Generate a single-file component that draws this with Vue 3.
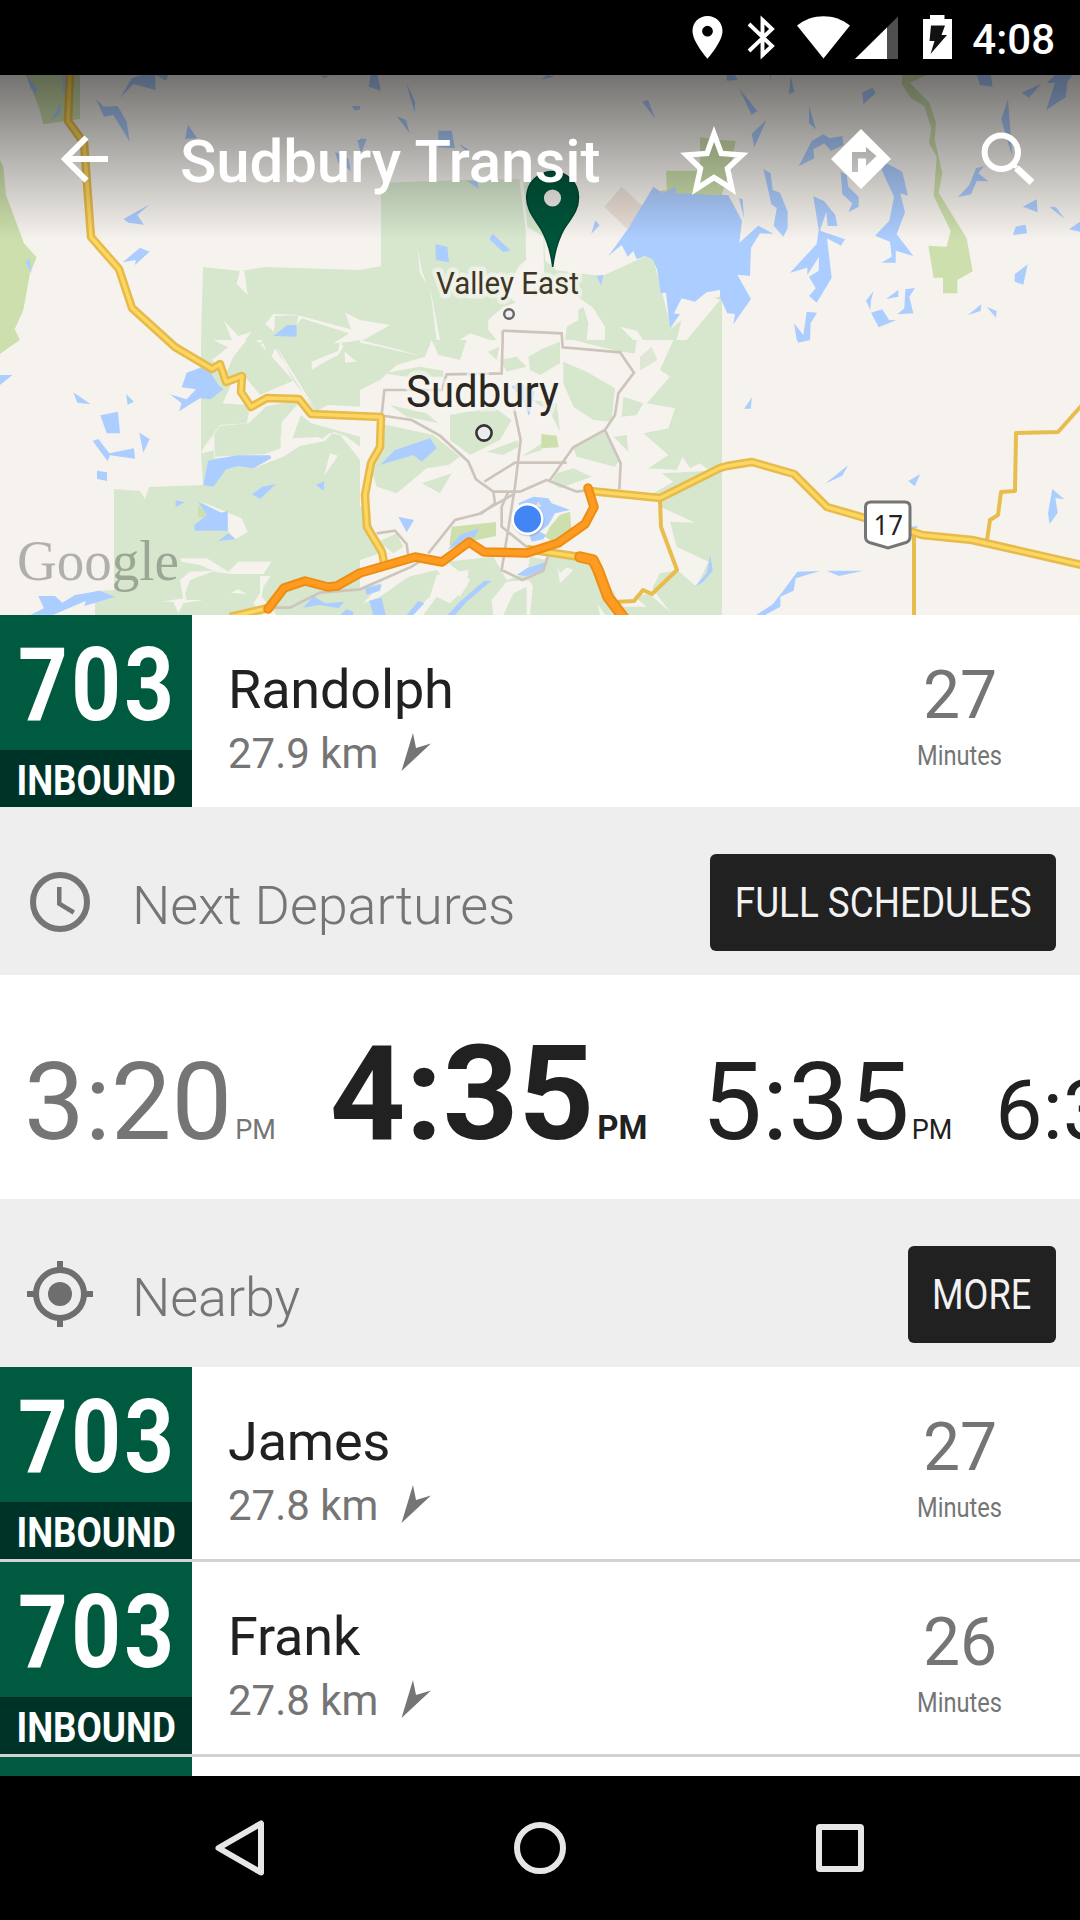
<script setup>
import { h } from 'vue'

const next = { route: '703', dir: 'INBOUND', name: 'Randolph', dist: '27.9 km', min: 27 }
const nearby = [
  { route: '703', dir: 'INBOUND', name: 'James', dist: '27.8 km', min: 27 },
  { route: '703', dir: 'INBOUND', name: 'Frank', dist: '27.8 km', min: 26 },
  { route: '', dir: '', name: '', dist: '', min: '' },
]
const times = [
  { t: '3:20', pm: 'PM', cls: 'past' },
  { t: '4:35', pm: 'PM', cls: 'current' },
  { t: '5:35', pm: 'PM', cls: 'later' },
  { t: '6:3', pm: '', cls: 'far' },
]

const StopRow = (p) =>
  h('div', { class: 'row' }, [
    h('div', { class: 'badge' }, [
      h('div', { class: 'num' }, [h('span', p.stop.route)]),
      h('div', { class: 'dir' }, [h('span', p.stop.dir)]),
    ]),
    p.stop.name
      ? h('div', { class: 'info' }, [
          h('div', { class: 'name' }, p.stop.name),
          h('div', { class: 'dist' }, [
            p.stop.dist,
            h('svg', { viewBox: '0 0 30 38', width: 30, height: 38 }, [
              h('path', { d: 'M12 0L15 15L30 10.5L0.5 38Z', fill: '#757575' }),
            ]),
          ]),
        ])
      : null,
    p.stop.name
      ? h('div', { class: 'eta' }, [
          h('div', { class: 'min' }, String(p.stop.min)),
          h('div', { class: 'unit' }, [h('span', 'Minutes')]),
        ])
      : null,
  ])
StopRow.props = ['stop']

const yellow = [
  'M70 70L70 75L68 121L84 143L91 237L119 269L132 308L175 347L212 369L220 364L226 382L242 376L241 392L251 407L267 398L299 399L311 414L381 417L380 447L371 463L365 495L367 527L382 552L384 562',
  'M590 491L660 498L720 468L727 466L752 462L794 474L827 507L865 518L913 532L922 535L972 540L1082 565',
  'M527 549L580 557',
  'M230 617L268 608',
]
const thin = [
  'M660 500L661 527L677 570L652 594L643 590L634 601L615 602',
  'M987 540L990 520L998 515L1001 492L1015 491L1016 433L1058 432L1082 405',
  'M914 533V616',
]
const orange = [
  { w: 9.5, d: 'M268 609L284 588L305 581L328 587L337 586L360 573L415 557L442 562L469 542L484 552L527 553L558 543L585 524L594 507L588 488' },
  { w: 11.5, d: 'M580 557L593 560L598 570L608 597L627 622' },
]
</script>

<template>
  <div class="screen">
    <header class="status">
      <svg width="440" height="75" viewBox="640 0 440 75" fill="#fff">
        <path fill-rule="evenodd" d="M707.500 16C699 16 692.500 22.600 692.500 31C692.500 42 707.500 58.700 707.500 58.700S722.500 42 722.500 31C722.500 22.600 716 16 707.500 16ZM707.500 25.800a5.400 5.400 0 1 1 0 10.800a5.400 5.400 0 1 1 0-10.800Z" />
        <path fill="none" stroke="#fff" stroke-width="3.900" d="M749 24L772 46L762.500 55V20L772 29L749 51" />
        <path d="M797 25.500C812 13 835 13 850 25.500L823.500 58.500Z" />
        <path d="M898 16.500V59H855Z" fill="#4f4f4f" />
        <path d="M887 27.500V59H855Z" />
        <path d="M930 15H944.500V19H952V59H923V19H930Z" />
        <path d="M931 25.500H945L941.500 35H947L930.500 54L934.500 41H929.500Z" fill="#111" />
      </svg>
      <span class="clock">4:08</span>
    </header>

    <section class="map">
      <svg class="canvas" width="1080" height="540" viewBox="0 75 1080 540">
        <rect y="75" width="1080" height="540" fill="#f6f3ee" />
        <path fill="#d7e7ce" d="M203 267L240 271L265 267L360 270L381 266L381 183L460 180L520 179L543 180L545 260L556 270L584 274L602 276L646 256L653 258L660 285L671 327L695 302L722 296V615H95V591L114 590V489L140 491L145 499L149 487L203 485L201 453V340Z" />
        <!-- western tiles -->
        <g transform="translate(0 60) scale(.33333)">
          <path fill="#cddfac" d="M0 300L10 320L18 405L72 550L110 592L90 640L70 750L44 808L60 840L0 880ZM78 45H240V177L130 193L118 145Z" />
          <path fill="#f6f3ee" d="M720 630L733 632L743 705L710 672ZM820 762L888 764L1080 815V830L905 775L890 795L895 765L825 768L822 815L796 792ZM672 782L715 828L755 815L720 860L700 850ZM1036 758L1080 780V840L1050 845L1000 850L1056 815Z" />
          <path fill="#accdff" d="M395 55L425 45H466V90L400 72L360 115ZM468 45H505L498 62ZM288 118L312 140L353 138L380 185L389 245L340 165L312 170ZM564 195L592 235L555 237ZM450 433L412 465L432 494L385 488L370 477ZM420 563L449 575L405 615L407 600L368 607ZM80 45L110 85L108 105L92 85ZM188 48H200V105L188 98ZM183 130L180 160L150 185ZM77 607L88 595L95 640ZM820 828L862 795H890V830ZM1055 138H1080V148L1065 152ZM1072 240H1080V270ZM1005 275L1045 295L1053 332L1015 308ZM962 47H988L975 54Z" />
        </g>
        <g transform="translate(0 340) scale(.33333)">
          <path fill="#cddfac" d="M0 0H55L0 42Z" />
          <path fill="#f6f3ee" d="M603 340L643 285V355L700 350L760 385L850 350L900 318L975 303L1000 275L1040 290L1080 320V360L1045 315L1020 285L990 278L970 295L877 295L903 225L935 250L1080 290V200L985 195L945 215L825 25L810 60L790 10L765 20L790 0H640L720 40L700 20L700 10L635 60L670 90L720 100L725 60ZM880 122L830 20L945 205ZM603 340L660 258L745 250L810 190L720 130L700 125L700 180L800 200L845 250L842 325L880 315L975 300L900 270ZM935 65L1015 32L1020 0L1030 20L1015 45L970 68L935 90ZM1034 35L1070 65L1035 68ZM990 340L1014 347L972 408ZM600 483L725 535L743 575L708 597L685 575L682 515L660 518ZM540 655H620L685 695L715 665H815L790 702H700L650 697L600 675L545 665ZM540 720L570 695L645 692L570 720L555 760L560 780H610L550 790L535 820L520 785L485 785L550 775ZM780 708H812L790 740L785 770L830 825H790L760 790L780 760ZM692 758L715 748L740 762Z" />
          <path fill="#d7e7ce" d="M645 290L668 263L745 270L795 200L842 190L900 185L842 250V325L795 342L645 350ZM605 200L660 190L745 195L750 205L740 250L660 255L605 330ZM903 228L970 290L877 295ZM780 165L880 122L770 0H740L700 50L680 95L735 110Z" />
          <path fill="#accdff" d="M0 105H37L0 135ZM560 98L605 82L630 95L655 135L670 148L632 178L600 175L537 214L545 190L510 163L560 178L588 148L545 142ZM220 157L272 193L232 188ZM378 162L402 185L383 194ZM301 226L354 215L360 280H320ZM278 303L295 297L328 340L402 325L405 356L330 346L323 364ZM418 278L449 297L430 338ZM291 392L321 397V423L291 417ZM624 362L710 346H810L814 355L760 385L715 378L678 388L640 440L610 435ZM756 463L787 440L828 432L780 477ZM948 434L973 424L970 452ZM527 481L555 487L527 501ZM595 487L665 518L683 512V572H583V555L620 525ZM655 603L685 580L705 597ZM115 768H165L187 788L225 765L300 752L345 770L253 798L257 783L160 824H92L132 805ZM910 803L940 768L975 790L1033 785L1015 805L960 795ZM1040 808L1060 815V825H1020Z" />
          <path fill="#cddfac" d="M594 495L620 522L612 532H594Z" />
        </g>
        <!-- central tiles -->
        <g transform="translate(360 60) scale(.33333)">
          <path fill="#f6f3ee" d="M478 358H490L502 500L550 530L552 640H540L500 755L440 705L475 620L498 600L497 510ZM172 560L185 630L200 672L180 640ZM210 680L240 840H230ZM0 780L90 795L10 840H0ZM385 780L430 740L540 705L640 700L700 745L735 800L735 840H410L385 810ZM780 800L830 812L850 840H820ZM1080 720L1010 695L960 770L930 810L965 780L950 840H980ZM330 820L390 840H300Z" />
          <path fill="#d7e7ce" d="M655 750L670 740L685 790L680 840H655ZM620 800L655 780V840H615Z" />
          <path fill="#eadfd6" d="M785 380L850 440L802 508L733 440Z" />
          <path fill="#cddfac" d="M918 332H1020V232L1080 240V408H900L860 440L885 395L920 390Z" />
          <path fill="#accdff" d="M880 380L908 400L948 380L946 400L1080 406V690L1040 697L1005 725L965 715L942 760L960 763L930 804L918 698L902 700L892 630L878 598L855 588L830 598L820 573L803 590L785 555L745 588L803 508ZM32 45H52L63 92L26 80ZM140 70L165 125V160L150 110ZM110 168L138 180L149 220ZM235 212H275L285 265L235 262ZM0 236H20L5 275H0ZM297 252L325 268L322 278ZM320 362H352L356 386ZM388 538L398 521L452 572L430 577ZM226 552L262 560L267 607L228 600ZM847 125L864 120L886 177ZM706 481L719 496L694 521ZM710 648L730 644L724 678ZM545 58L560 45L585 50Z" />
        </g>
        <g transform="translate(360 340) scale(.33333)">
          <path fill="#f6f3ee" d="M0 150L60 120L110 75L195 50L215 0H940L900 90L930 110L860 190L945 205L925 265L850 280L925 345L865 385L950 390L968 350L990 385L1020 370L1050 392L905 400L940 425L880 460L900 500L1005 548L930 545L950 620L1045 665L1010 740L952 690L900 700L870 760L780 780L720 700L690 660L560 650L530 690L470 710L440 720L400 650L260 665L330 720L300 770L230 690L0 745V660L60 640L20 500L0 500Z" />
          <path fill="#f6f3ee" d="M0 0L120 30L180 48L60 20L0 8ZM0 175H70V210H0ZM150 825L210 770L230 705L325 690L320 740L270 790L230 770L190 825ZM100 690L160 700L60 770L10 790ZM440 725L520 720L510 825H500L500 740L460 760L430 825H400L395 780L420 750ZM760 720L890 700L800 750L860 800L770 800ZM850 710L930 815L865 760ZM590 670L640 690L600 730ZM700 770L735 825H690Z" />
          <path fill="#d7e7ce" d="M215 0H320L300 60L235 45ZM383 35L418 20L410 60ZM505 50L550 25L600 5V70L540 105L510 90ZM610 65L680 95L765 145L755 245L700 240L640 200L610 130ZM270 225L400 200L455 240L420 300L330 345L270 300ZM70 100L180 80L250 92L250 110L140 110ZM90 195L200 220L235 250L140 230ZM55 250L220 285L300 350L265 375L200 385L110 460L50 440L35 390L70 320ZM380 335L475 300L475 320L430 345ZM735 275L775 365L765 380L650 350L640 325ZM590 400L640 385L695 410L600 445L575 425ZM185 430L275 400L240 460ZM515 180L590 190L600 275L570 215ZM485 350L545 310V330L500 345ZM640 0H830L825 40L780 35ZM790 170L850 190L830 225L785 230ZM760 290L800 285L805 335ZM55 605L110 580L130 620L100 640ZM510 650L560 660L555 720L520 740L500 710ZM585 660L640 665L600 700ZM700 720L720 825H600L600 730ZM420 60L470 50L500 80L440 95Z" />
          <path fill="#dfe6d6" d="M840 50L875 20L892 60L840 92Z" />
          <path fill="#cddfac" d="M544 282L590 287L596 322L544 325ZM275 560L408 546V588L268 617ZM570 560L600 525L630 515L635 575L580 605L555 590Z" />
          <path fill="#accdff" d="M60 375L105 330L210 295L230 325L185 365L160 345ZM475 490L520 470L565 475L575 490L630 510L585 520L565 555L540 575L558 585L550 598L515 605L500 560ZM115 530L162 540L140 577ZM262 630L300 585L357 565L345 590ZM470 705L500 685L560 665L550 690L500 708ZM262 825L300 785L372 722L395 722L320 785L285 825ZM15 745L65 733L60 752L20 765ZM28 782L65 773L77 825H40ZM140 825L175 783L193 790L160 825ZM1003 742L1040 700L1051 645L1058 692L1030 725ZM455 140L480 125L525 155L507 228L485 175Z" />
          <path fill="#e4e1dc" d="M535 485L545 500L525 500Z" />
          <g fill="none" stroke="#cdc5bc" stroke-width="8">
            <path d="M428 -28L428 0L425 100L260 103L245 150H73L65 225M428 -28L605 -20L608 22L780 37L822 98L775 160L765 225L735 270L640 322L570 420M735 270L782 370L778 448M75 228L155 240L240 287L325 365L348 418L400 455H480L560 420L650 455L690 450M462 205L482 300L465 440L425 690L487 720L550 692L565 645M373 425L465 368H620M400 455L405 490L365 520L285 540L205 640M360 520L465 460M445 455L425 500V560L505 625M50 580L105 572L140 612L145 650M200 650L155 680L0 748L-120 758L-210 803H-265" />
          </g>
        </g>
        <!-- eastern tiles -->
        <g transform="translate(720 60) scale(.33333)">
          <path fill="#cddfac" d="M0 240L47 243L30 330L5 405H0ZM547 45H620L570 68L610 110L628 128L648 188L644 238L667 340L656 398L740 535L758 634L712 660V700H669V653H641L625 557L680 560L692 512L641 408L650 290L627 250L634 205L612 138L573 115L545 72Z" />
          <path fill="#accdff" d="M0 404L25 406L66 482L58 548L115 497L160 521L120 520L93 563L90 648L52 644L93 717L40 793L45 762L22 760L0 712ZM57 415L68 418L72 475ZM20 45H45L53 60L20 62ZM212 48L223 95L207 103ZM57 85L112 153L95 165ZM140 178L103 262L95 222ZM267 137L288 208L267 190ZM427 97L458 83L467 100L430 133ZM310 223L328 235L367 228L370 255L333 273L313 250L280 268L283 295L236 319L275 243ZM130 327L152 340L158 390L180 398L203 455V505L190 530L161 497L170 445L154 433ZM362 335L380 345L385 380L416 410V440L385 457L397 430L367 403ZM497 308L547 335L564 407L541 400L555 457L530 523L580 588L527 572V608H484L515 590L510 545L465 527L508 482L522 410L485 330ZM280 409L312 423L346 465L352 498H323L319 455L300 512L375 538L363 557L321 535L335 654L290 728L267 708L287 685L267 650L296 632L297 590L262 645V623L210 638L290 552L296 510ZM461 693L453 720L451 750L438 722ZM535 690V710L498 717ZM585 684L568 710L580 760L532 763L553 745L556 688ZM453 758L487 748L507 780L528 781L476 802ZM260 755L291 758L272 790L270 840H230L222 790L250 825ZM771 45H813L818 80L780 75ZM905 98L963 72L927 113ZM1005 45H1058L1042 65L1037 112L978 151L1005 68L980 70ZM864 118L877 290L860 235L844 177ZM832 308L790 320L775 340L805 364L770 363L753 403L713 412L748 375L768 325ZM908 440L950 418L953 457ZM988 440L1008 442L1035 478ZM1047 508L1080 485V515ZM887 500L917 494L921 520L879 525ZM884 643L923 613L910 674L884 665ZM743 766L784 733L782 753ZM800 740L830 753L828 773Z" />
          <path fill="#accdff" d="M150 45H153V72Z" />
        </g>
        <g transform="translate(720 340) scale(.33333)">
          <path fill="#accdff" d="M231 0H270L235 8ZM96 172L92 206H72ZM315 431L384 376L367 407ZM565 423L601 402L584 439ZM576 560L594 558L590 564H576ZM997 447L1033 478L1006 474L1013 518L989 552L984 520ZM108 825L158 793L180 765L232 695L300 693L227 715L221 752L181 770V800L135 825ZM320 692H430L357 708Z" />
        </g>
        <g fill="none" stroke-linejoin="round">
          <path v-for="d in thin" :key="d" :d="d" stroke="#e8bd4e" stroke-width="4" />
          <path v-for="d in yellow" :key="d" :d="d" stroke="#e6ba4b" stroke-width="8.500" />
          <path v-for="d in yellow" :key="'i' + d" :d="d" stroke="#fdd75f" stroke-width="3.500" />
          <path v-for="r in orange" :key="r.d" :d="r.d" stroke="#ec8e12" :stroke-width="r.w" stroke-linecap="round" />
          <path v-for="r in orange" :key="'i' + r.d" :d="r.d" stroke="#ff9b22" :stroke-width="r.w - 4" stroke-linecap="round" />
        </g>
        <g class="lbl">
          <text x="436" y="294" font-size="32" fill="#3f3524" textLength="143" lengthAdjust="spacingAndGlyphs">Valley East</text>
          <text x="406" y="406.500" font-size="45" fill="#2a2620" textLength="153" lengthAdjust="spacingAndGlyphs">Sudbury</text>
        </g>
        <circle cx="509" cy="314" r="4.800" fill="#f0efee" stroke="#666" stroke-width="2.400" />
        <circle cx="484" cy="433" r="7.600" fill="#ececec" stroke="#333" stroke-width="2.600" />
        <circle cx="528" cy="520" r="16.500" fill="#000" opacity=".12" />
        <circle cx="527.500" cy="519" r="14.800" fill="#4285f4" stroke="#fff" stroke-width="2.500" />
        <path d="M871 502H905Q910 502 910 507V537Q910 541 906 542.500L888 548L869.500 542.500Q865.500 541 865.500 537V507Q865.500 502 871 502Z" fill="#fff" stroke="#757575" stroke-width="3" />
        <text x="873.500" y="534.500" class="shield" textLength="29.500" lengthAdjust="spacingAndGlyphs">17</text>
        <text x="17" y="580" class="goog" textLength="162" lengthAdjust="spacingAndGlyphs">Google</text>
        <path fill-rule="evenodd" fill="#00543b" stroke="#00452f" stroke-width="1.500" d="M552.500 171.500C538 171.500 526.700 183 526.700 197.500C526.700 211 535 219 541 229C547 240 551 252 552.700 267C554.500 252 558 240 564 229C571 218 578.500 211 578.500 197.500C578.500 183 567 171.500 552.500 171.500Z" />
        <circle cx="552.500" cy="198" r="8.600" fill="#eeebe7" />
      </svg>
      <div class="toolbar">
        <svg width="182" height="165" viewBox="0 75 182 165" fill="none" stroke="#fff" stroke-width="6">
          <path d="M108 159H65M86.500 137.500L65 159L86.500 180.500" />
        </svg>
        <h1>Sudbury Transit</h1>
        <svg class="actions" width="420" height="165" viewBox="660 75 420 165">
          <path fill="none" stroke="#fff" stroke-width="5.500" d="M714 134L721.300 153.400L742 155L727.500 168.500L732 189L714 177.500L696 189L700.500 168.500L686.500 155L707 153.400Z" />
          <path fill="#fff" fill-rule="evenodd" d="M861 129L891 159L861 189L831 159ZM866 147V152H852V172H858V158.500H866V166L876.500 156Z" />
          <circle cx="1001.300" cy="152.300" r="16.700" fill="none" stroke="#fff" stroke-width="6" />
          <path d="M1012 163L1016.500 167.500" stroke="#fff" stroke-width="4" />
          <path d="M1016.500 168L1032 182.500" stroke="#fff" stroke-width="7" />
        </svg>
      </div>
    </section>

    <StopRow :stop="next" />

    <div class="head">
      <svg width="72" height="72" viewBox="0 0 24 24" fill="none" stroke="#757575" stroke-width="2"><circle cx="12" cy="12" r="9" /><path stroke-width="1.500" d="M11.750 7V12.600L16.600 15.500" /></svg>
      <h2>Next Departures</h2>
      <button class="full"><span>FULL SCHEDULES</span></button>
    </div>

    <div class="times">
      <div v-for="x in times" :key="x.t" class="time" :class="x.cls">
        <span class="t">{{ x.t }}</span><span v-if="x.pm" class="pm">{{ x.pm }}</span>
      </div>
    </div>

    <div class="head">
      <svg width="72" height="72" viewBox="0 0 24 24" fill="#6e6e6e"><circle cx="12" cy="12" r="4" /><path fill="none" stroke="#6e6e6e" stroke-width="2" d="M12 1V4M12 20V23M1 12H4M20 12H23" /><circle cx="12" cy="12" r="8" fill="none" stroke="#6e6e6e" stroke-width="2" /></svg>
      <h2>Nearby</h2>
      <button class="more"><span>MORE</span></button>
    </div>

    <div class="list">
      <StopRow v-for="s in nearby" :key="s.name" :stop="s" />
    </div>

    <nav class="nav">
      <svg width="1080" height="144" viewBox="0 1776 1080 144" fill="none" stroke="#e6e6e6" stroke-width="6" stroke-linejoin="round">
        <path d="M261 1823.500V1872.500L218.500 1848Z" />
        <circle cx="540" cy="1848" r="23" />
        <rect x="819" y="1827" width="42" height="42" rx="1" />
      </svg>
    </nav>
  </div>
</template>

<style>
body { margin: 0; background: #000; }
</style>

<style scoped>
.screen { width: 1080px; height: 1920px; display: flex; flex-direction: column; overflow: hidden; background: #fff; font-family: Roboto, sans-serif; color: #212121; }
.screen svg { display: block; flex: none; }
.status { height: 75px; flex: none; background: #000; display: flex; justify-content: flex-end; position: relative; }
.clock { position: absolute; right: 25px; top: 0; line-height: 79px; font-size: 42px; font-weight: 500; color: #fff; }
.map { height: 540px; flex: none; position: relative; overflow: hidden; }
.toolbar { position: absolute; inset: 0 0 auto 0; height: 165px; display: flex; background: linear-gradient(rgba(0,0,0,.53), rgba(0,0,0,0)); }
.toolbar h1 { margin: 0; flex: 1; width: 0; white-space: nowrap; font-size: 60px; font-weight: 500; line-height: 173px; letter-spacing: -.1px; color: #fff; margin-left: -2px; }
.lbl text { paint-order: stroke; stroke: #f8f6f2; stroke-opacity: .65; stroke-width: 9px; stroke-linejoin: round; }
.shield { font-family: "Noto Sans", sans-serif; font-size: 28px; fill: #222; }
.goog { font-family: "Liberation Serif", serif; font-size: 57px; fill: #000; fill-opacity: .28; }

.screen :deep(.row) { height: 192px; flex: none; display: flex; background: #fff; }
.screen :deep(.badge) { width: 192px; height: 192px; flex: none; overflow: hidden; background: #005a40; color: #fff; font-weight: 700; }
.screen :deep(.badge div) { display: flex; justify-content: center; white-space: nowrap; }
.screen :deep(.num) { height: 135px; line-height: 140px; font-size: 102px; }
.screen :deep(.num span) { transform: scaleX(.85); letter-spacing: 4px; margin-right: -4px; }
.screen :deep(.dir) { height: 57px; line-height: 61px; font-size: 42px; background: #003327; }
.screen :deep(.dir span) { transform: scaleX(.875); }
.screen :deep(.info) { flex: 1; padding: 43px 0 0 36px; }
.screen :deep(.name) { font-size: 54px; line-height: 63px; letter-spacing: -.15px; }
.screen :deep(.dist) { display: flex; font-size: 42px; line-height: 65px; color: #757575; }
.screen :deep(.dist svg) { display: block; margin: 12px 0 0 23px; }
.screen :deep(.eta) { width: 240px; padding-top: 30px; text-align: center; color: #757575; }
.screen :deep(.min) { font-size: 66px; line-height: 101px; }
.screen :deep(.unit) { display: flex; justify-content: center; font-size: 27px; line-height: 20px; }
.screen :deep(.unit span) { transform: scaleX(.875); }

.head { height: 168px; flex: none; box-sizing: border-box; padding: 22px 24px 0; background: #eee; display: flex; align-items: center; }
.head h2 { flex: 1; margin: 0; padding: 7px 0 0 36px; font-size: 54px; line-height: 60px; font-weight: 300; letter-spacing: -.1px; color: #757575; }
.head button { height: 97px; border: 0; padding: 0; border-radius: 6px; background: #212121; color: #f2f2f2; font: 42px/97px Roboto, sans-serif; display: flex; justify-content: center; white-space: nowrap; }
.head button span { transform: scaleX(.877); }
.head .more span { transform: scaleX(.86); }
.full { width: 346px; }
.more { width: 148px; }

.times { height: 224px; flex: none; box-sizing: border-box; padding: 53px 0 0 24px; display: flex; align-items: baseline; white-space: nowrap; overflow: hidden; }
.time { display: flex; align-items: baseline; line-height: 1; font-size: 108px; margin-right: 55px; }
.pm { font-size: 27px; margin-left: 3px; line-height: 1; }
.past { color: #757575; }
.past, .current { margin-right: 54px; }
.current { font-size: 132px; font-weight: 700; }
.current .pm { font-size: 33px; }
.later { margin-right: 43px; }
.later .pm { margin-left: 2px; }
.far { font-size: 84px; }

.list { flex: 1; height: 0; overflow: hidden; display: flex; flex-direction: column; gap: 3px; background: #d2d2d2; }
.list :deep(.row:last-child .dir) { visibility: hidden; }
.nav { height: 144px; flex: none; background: #000; }
</style>
